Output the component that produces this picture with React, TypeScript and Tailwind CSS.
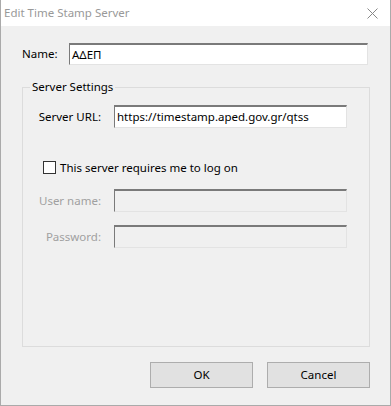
import { useState } from "react";

function Field({ value, disabled }: { value?: string; disabled?: boolean }) {
    return (
        <div
            className={
                "h-[23px] w-[233px] border-t-2 border-l border-b border-r border-t-[#7a7a7a] border-l-[#7a7a7a] border-b-[#e3e3e3] border-r-[#e3e3e3] px-[2px] flex items-center " +
                (disabled ? "bg-[#f0f0f0]" : "bg-white")
            }
        >
            {value}
        </div>
    );
}

function Row({
    label,
    value,
    disabled,
}: {
    label: string;
    value?: string;
    disabled?: boolean;
}) {
    return (
        <div className="flex items-center">
            <span
                className={
                    "w-[91px] shrink-0 text-right pr-[13px] " +
                    (disabled ? "text-[#a0a0a0]" : "text-black")
                }
            >
                {label}
            </span>
            <Field value={value} disabled={disabled} />
        </div>
    );
}

export default function App() {
    const [needsLogon, setNeedsLogon] = useState(false);

    return (
        <div
            className="w-[391px] h-[406px] bg-[#f0f0f0] border border-[#aaaaaa] border-t-0 flex flex-col text-[11.5px] text-black"
            style={{ fontFamily: '"Noto Sans", "Liberation Sans", sans-serif' }}
        >
            <div className="h-[26px] bg-white flex items-center justify-between pl-[3px] pr-[12px] text-[#999999]">
                <span>Edit Time Stamp Server</span>
                <svg width="11" height="11" viewBox="0 0 11 11">
                    <path d="M0.5 0.5 L10.5 10.5 M10.5 0.5 L0.5 10.5" stroke="#888" strokeWidth="1" />
                </svg>
            </div>

            <div className="flex-1 flex flex-col pl-[21px] pr-[20px]">
                <div className="flex items-center mt-[17px]">
                    <span className="w-[47px] shrink-0">Name:</span>
                    <div className="h-[22px] w-[299px] bg-white border-t-2 border-l border-b border-r border-t-[#7a7a7a] border-l-[#7a7a7a] border-b-[#e3e3e3] border-r-[#e3e3e3] px-[2px] flex items-center">
                        ΑΔΕΠ
                    </div>
                </div>

                <fieldset className="mt-[14px] w-[348px] h-[268px] border border-[#dcdcdc] p-0 m-0 min-w-0">
                    <legend className="ml-[7px] px-[2px] leading-[16px]">Server Settings</legend>
                    <div className="flex flex-col mt-[10px]">
                        <Row label="Server URL:" value="https://timestamp.aped.gov.gr/qtss" />

                        <label className="flex items-center mt-[31px] ml-[20px] gap-[4px] cursor-default">
                            <input
                                type="checkbox"
                                checked={needsLogon}
                                onChange={(e) => setNeedsLogon(e.target.checked)}
                                className="appearance-none w-[13px] h-[13px] border border-[#333333] bg-white m-0"
                            />
                            <span>This server requires me to log on</span>
                        </label>

                        <div className="mt-[13px] flex flex-col gap-[13px]">
                            <Row label="User name:" disabled={!needsLogon} />
                            <Row label="Password:" disabled={!needsLogon} />
                        </div>
                    </div>
                </fieldset>

                <div className="flex justify-end gap-[14px] mt-[15px]">
                    <button className="w-[103px] h-[26px] bg-[#e1e1e1] border border-[#adadad]">OK</button>
                    <button className="w-[103px] h-[26px] bg-[#e1e1e1] border border-[#adadad]">Cancel</button>
                </div>
            </div>
        </div>
    );
}
